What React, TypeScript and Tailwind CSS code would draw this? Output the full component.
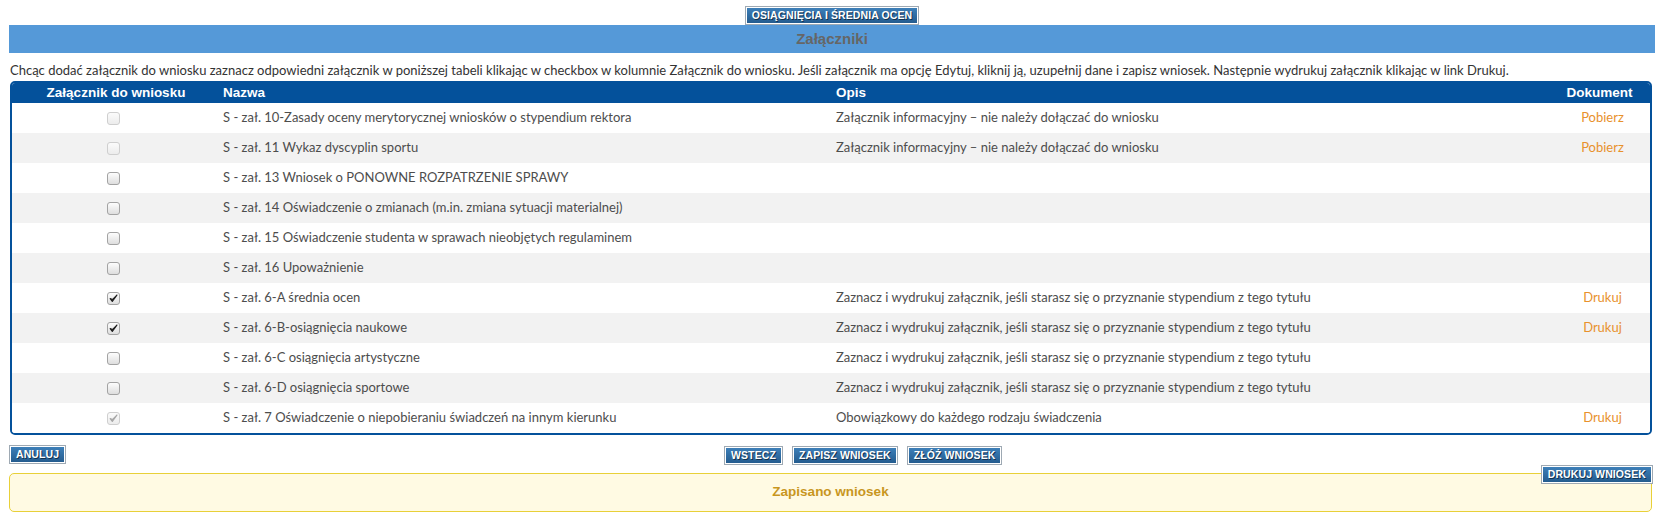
import React from "react";

type Row = { name: string; desc: string; doc: string; state: "disabled" | "empty" | "checked" | "checkedDisabled" };

const rows: Row[] = [
  { name: "S - zał. 10-Zasady oceny merytorycznej wniosków o stypendium rektora", desc: "Załącznik informacyjny – nie należy dołączać do wniosku", doc: "Pobierz", state: "disabled" },
  { name: "S - zał. 11 Wykaz dyscyplin sportu", desc: "Załącznik informacyjny – nie należy dołączać do wniosku", doc: "Pobierz", state: "disabled" },
  { name: "S - zał. 13 Wniosek o PONOWNE ROZPATRZENIE SPRAWY", desc: "", doc: "", state: "empty" },
  { name: "S - zał. 14 Oświadczenie o zmianach (m.in. zmiana sytuacji materialnej)", desc: "", doc: "", state: "empty" },
  { name: "S - zał. 15 Oświadczenie studenta w sprawach nieobjętych regulaminem", desc: "", doc: "", state: "empty" },
  { name: "S - zał. 16 Upoważnienie", desc: "", doc: "", state: "empty" },
  { name: "S - zał. 6-A średnia ocen", desc: "Zaznacz i wydrukuj załącznik, jeśli starasz się o przyznanie stypendium z tego tytułu", doc: "Drukuj", state: "checked" },
  { name: "S - zał. 6-B-osiągnięcia naukowe", desc: "Zaznacz i wydrukuj załącznik, jeśli starasz się o przyznanie stypendium z tego tytułu", doc: "Drukuj", state: "checked" },
  { name: "S - zał. 6-C osiągnięcia artystyczne", desc: "Zaznacz i wydrukuj załącznik, jeśli starasz się o przyznanie stypendium z tego tytułu", doc: "", state: "empty" },
  { name: "S - zał. 6-D osiągnięcia sportowe", desc: "Zaznacz i wydrukuj załącznik, jeśli starasz się o przyznanie stypendium z tego tytułu", doc: "", state: "empty" },
  { name: "S - zał. 7 Oświadczenie o niepobieraniu świadczeń na innym kierunku", desc: "Obowiązkowy do każdego rodzaju świadczenia", doc: "Drukuj", state: "checkedDisabled" },
];

function Checkbox({ state }: { state: Row["state"] }) {
  const disabled = state === "disabled" || state === "checkedDisabled";
  const checked = state === "checked" || state === "checkedDisabled";
  return (
    <span
      className={
        disabled
          ? "flex h-[13px] w-[13px] items-center justify-center rounded-[3px] border border-[#cfcfcf] bg-gradient-to-b from-[#fbfbfb] to-[#ececec]"
          : "flex h-[13px] w-[13px] items-center justify-center rounded-[3px] border border-[#a3a3a3] bg-gradient-to-b from-[#fdfdfd] to-[#dedede]"
      }
    >
      {checked && (
        <svg width="9" height="9" viewBox="0 0 9 9">
          <path
            d="M1.2 4.6 L3.3 7.4 L7.9 1.1 L3.4 5.6 Z"
            fill={disabled ? "#a8a8a8" : "#222"}
            stroke={disabled ? "#a8a8a8" : "#222"}
            strokeWidth="1.2"
            strokeLinecap="round"
            strokeLinejoin="round"
          />
        </svg>
      )}
    </span>
  );
}

function Btn({ children }: { children: React.ReactNode }) {
  return (
    <span className="inline-flex border border-[#9ea9b3] bg-white p-px">
      <span className="flex h-[15px] items-center bg-gradient-to-b from-[#3d7fb8] to-[#245c8f] px-[5px] font-['Liberation_Sans',sans-serif] text-[10.5px] font-bold uppercase leading-none tracking-[0.1px] text-white [text-shadow:1px_1px_0_#12324f]">
        {children}
      </span>
    </span>
  );
}

export default function App() {
  return (
    <div className="min-h-[517px] w-[1657px] bg-white pl-[9px] pr-[2px] pt-[6px] font-['Lato',sans-serif] text-[#4d4d4d]">
      <div className="flex justify-center">
        <Btn>Osiągnięcia i średnia ocen</Btn>
      </div>
      <div className="flex h-[28px] items-center justify-center bg-[#5599d8] font-['Liberation_Sans',sans-serif] text-[15px] font-bold text-[#666]">
        Załączniki
      </div>
      <p className="mt-[8px] pl-px text-[13px] leading-[18px] text-[#333]">
        Chcąc dodać załącznik do wniosku zaznacz odpowiedni załącznik w poniższej tabeli klikając w checkbox w kolumnie Załącznik do wniosku. Jeśli załącznik ma opcję Edytuj, kliknij ją, uzupełnij dane i zapisz wniosek. Następnie wydrukuj załącznik klikając w link Drukuj.
      </p>
      <div className="ml-px mr-[3px] mt-[2px] overflow-hidden rounded-[5px] border-2 border-[#04519b]">
        <div className="grid h-[20px] grid-cols-[202px_614px_1fr_95px] items-center bg-[#04519b] font-['Liberation_Sans',sans-serif] text-[13.5px] font-bold text-white">
          <div className="pl-[6px] text-center">Załącznik do wniosku</div>
          <div className="pl-[9px]">Nazwa</div>
          <div className="pl-[8px]">Opis</div>
          <div className="pr-[6px] text-center">Dokument</div>
        </div>
        {rows.map((r, i) => (
          <div
            key={i}
            className={
              i % 2 === 0
                ? "grid h-[30px] grid-cols-[202px_614px_1fr_95px] items-center bg-white text-[13px]"
                : "grid h-[30px] grid-cols-[202px_614px_1fr_95px] items-center bg-[#f2f2f2] text-[13px]"
            }
          >
            <div className="flex justify-center">
              <Checkbox state={r.state} />
            </div>
            <div className="pl-[9px]">{r.name}</div>
            <div className="pl-[8px]">{r.desc}</div>
            <div className="text-center text-[#e8912c]">{r.doc}</div>
          </div>
        ))}
      </div>
      <div className="relative mt-[10px] flex h-[18px] items-start">
        <Btn>Anuluj</Btn>
        <div className="absolute left-[715px] top-px flex gap-[9px]">
          <Btn>Wstecz</Btn>
          <Btn>Zapisz wniosek</Btn>
          <Btn>Złóż wniosek</Btn>
        </div>
      </div>
      <div className="relative mr-[3px] mt-[10px] flex h-[39px] items-center justify-center rounded-[5px] border border-[#e8d038] bg-[#fffae3] font-['Liberation_Sans',sans-serif] text-[13.5px] font-bold text-[#c8961e]">
        Zapisano wniosek
        <div className="absolute right-[-2px] top-[-10px]">
          <Btn>Drukuj wniosek</Btn>
        </div>
      </div>
    </div>
  );
}
